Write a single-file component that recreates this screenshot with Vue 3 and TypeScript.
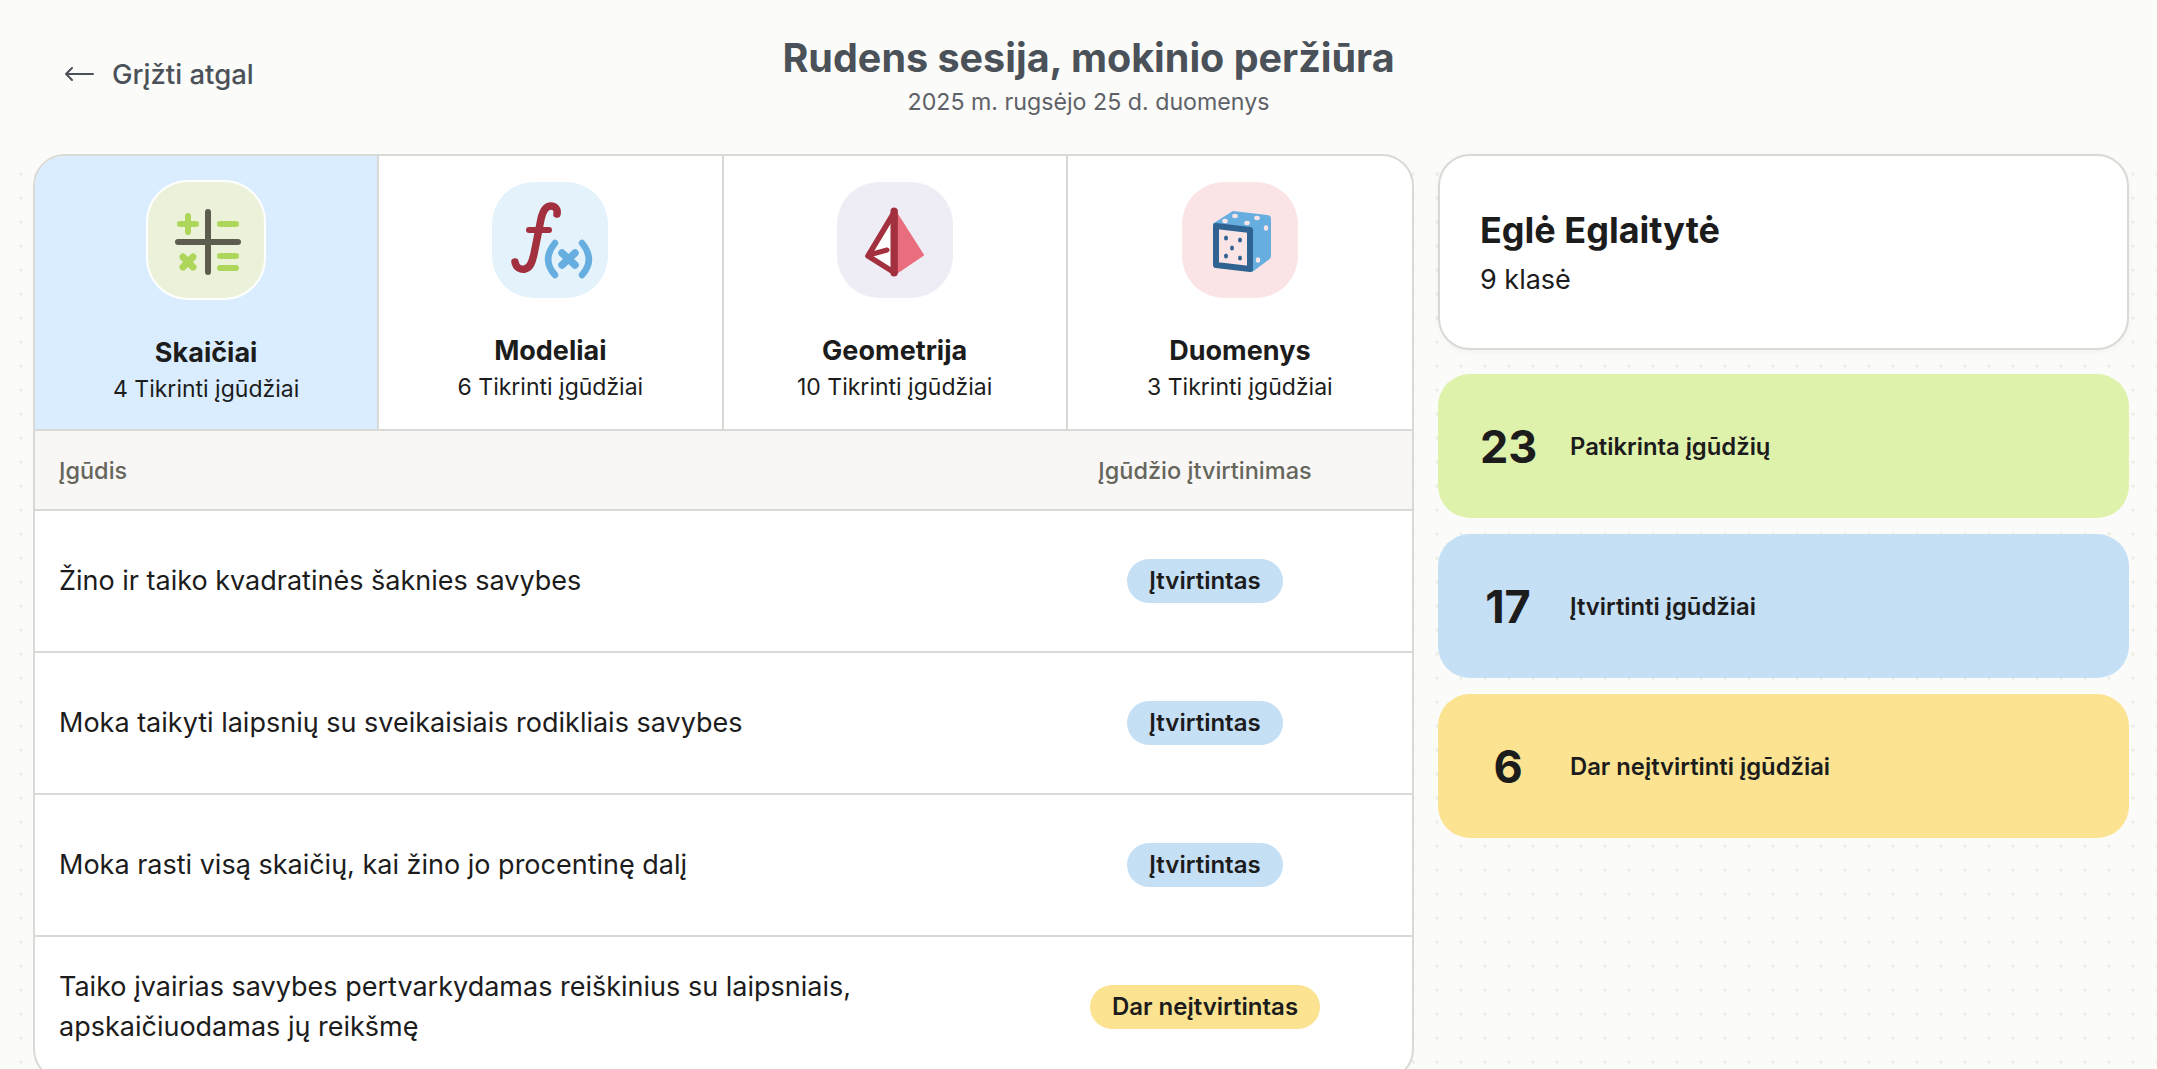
<script setup lang="ts">
interface Tab {
  name: string;
  count: number;
  tone: string;
  kind: string;
}

interface Skill {
  text: string;
  done: boolean;
}

interface Stat {
  value: number;
  label: string;
  tone: string;
}

const tabs: Tab[] = [
  { name: 'Skaičiai', count: 4, tone: 'green', kind: 'calc' },
  { name: 'Modeliai', count: 6, tone: 'blue', kind: 'fx' },
  { name: 'Geometrija', count: 10, tone: 'violet', kind: 'pyramid' },
  { name: 'Duomenys', count: 3, tone: 'pink', kind: 'dice' },
];

const skills: Skill[] = [
  { text: 'Žino ir taiko kvadratinės šaknies savybes', done: true },
  { text: 'Moka taikyti laipsnių su sveikaisiais rodikliais savybes', done: true },
  { text: 'Moka rasti visą skaičių, kai žino jo procentinę dalį', done: true },
  { text: 'Taiko įvairias savybes pertvarkydamas reiškinius su laipsniais, apskaičiuodamas jų reikšmę', done: false },
];

const stats: Stat[] = [
  { value: 23, label: 'Patikrinta įgūdžių', tone: 'lime' },
  { value: 17, label: 'Įtvirtinti įgūdžiai', tone: 'sky' },
  { value: 6, label: 'Dar neįtvirtinti įgūdžiai', tone: 'sand' },
];
</script>

<template>
  <div class="page">
    <header class="top">
      <a class="back">
        <svg class="back-arrow" width="30" height="18" viewBox="0 0 30 18" fill="none">
          <path d="M29 9H2M8 3L2 9l6 6" stroke="#4b5158" stroke-width="2" stroke-linecap="round" stroke-linejoin="round" />
        </svg>
        <span>Grįžti atgal</span>
      </a>
      <div class="heading">
        <h1>Rudens sesija, mokinio peržiūra</h1>
        <p>2025 m. rugsėjo 25 d. duomenys</p>
      </div>
    </header>

    <div class="layout">
      <section class="board">
        <div class="tabs">
          <div v-for="(tab, i) in tabs" :key="tab.name" class="tab" :class="{ active: i === 0 }">
            <div class="tile" :class="tab.tone">
              <svg v-if="tab.kind === 'calc'" width="116" height="116" viewBox="0 0 116 116" fill="none">
                <g stroke="#aed65a" stroke-width="6" stroke-linecap="round">
                  <path d="M32 42H48M40 34V50M72 42H88" />
                  <path d="M35 75L45 85M45 75L35 85" stroke-width="7" />
                  <path d="M72 74H88M72 86H88" />
                </g>
                <path d="M60 30V90M30 60H90" stroke="#5d5d4f" stroke-width="6" stroke-linecap="round" />
              </svg>
              <svg v-else-if="tab.kind === 'fx'" width="116" height="116" viewBox="0 0 116 116" fill="none">
                <path d="M23 80c1 6 6 8 10 7 5-1 7-6 9-15l7-35c2-9 6-13 10-13 4 0 7 3 6 8" stroke="#a3303f" stroke-width="7.500" stroke-linecap="round" />
                <path d="M37 48H57" stroke="#a3303f" stroke-width="6" stroke-linecap="round" />
                <path d="M63 61c-9 11-9 22 0 32M90 61c9 11 9 22 0 32" stroke="#67aee0" stroke-width="6.500" stroke-linecap="round" />
                <path d="M70 71L83 83M83 71L70 83" stroke="#67aee0" stroke-width="7.500" stroke-linecap="round" />
              </svg>
              <svg v-else-if="tab.kind === 'pyramid'" width="116" height="116" viewBox="0 0 116 116" fill="none">
                <path d="M58 29L86 73L58 92Z" fill="#e86d7d" stroke="#e86d7d" stroke-width="2" stroke-linejoin="round" />
                <path d="M58 29L31 74L58 91Z" fill="#fff" stroke="#a3303f" stroke-width="5.500" stroke-linejoin="round" />
                <path d="M57 29V91" stroke="#a3303f" stroke-width="7" stroke-linecap="round" />
                <path d="M32 73L50 68" stroke="#a3303f" stroke-width="5" stroke-linecap="round" />
              </svg>
              <svg v-else width="116" height="116" viewBox="0 0 116 116" fill="none">
                <path d="M32 42L51 30L85 34Q88 34 88 37V74Q88 76 86 77L70 89Z" fill="#67aee0" stroke="#67aee0" stroke-width="2" stroke-linejoin="round" />
                <path d="M34 44L68 48V87L34 83Z" fill="#fbe4e6" stroke="#2f6391" stroke-width="6" stroke-linejoin="round" />
                <g fill="#fbe4e6">
                  <ellipse cx="43" cy="39" rx="2.800" ry="2.200" />
                  <ellipse cx="53" cy="34" rx="2.800" ry="2.200" />
                  <ellipse cx="65" cy="41" rx="2.800" ry="2.200" />
                  <ellipse cx="75" cy="36" rx="2.800" ry="2.200" />
                  <ellipse cx="84" cy="46" rx="2.200" ry="2.800" />
                  <ellipse cx="76" cy="78" rx="2.200" ry="2.800" />
                </g>
                <g fill="#2f6391">
                  <ellipse cx="44" cy="56" rx="2" ry="2.500" />
                  <ellipse cx="58" cy="58" rx="2" ry="2.500" />
                  <ellipse cx="50" cy="66" rx="2" ry="2.500" />
                  <ellipse cx="44" cy="74" rx="2" ry="2.500" />
                  <ellipse cx="58" cy="76" rx="2" ry="2.500" />
                </g>
              </svg>
            </div>
            <h2>{{ tab.name }}</h2>
            <p>{{ tab.count }} Tikrinti įgūdžiai</p>
          </div>
        </div>

        <div class="table-head">
          <span>Įgūdis</span>
          <span class="head-right">Įgūdžio įtvirtinimas</span>
        </div>

        <div v-for="skill in skills" :key="skill.text" class="row">
          <div class="skill">{{ skill.text }}</div>
          <div class="status">
            <span class="pill" :class="skill.done ? 'sky' : 'sand'">{{ skill.done ? 'Įtvirtintas' : 'Dar neįtvirtintas' }}</span>
          </div>
        </div>
      </section>

      <aside class="side">
        <div class="student">
          <h2>Eglė Eglaitytė</h2>
          <p>9 klasė</p>
        </div>
        <div v-for="stat in stats" :key="stat.label" class="stat" :class="stat.tone">
          <span class="value">{{ stat.value }}</span>
          <span class="label">{{ stat.label }}</span>
        </div>
      </aside>
    </div>
  </div>
</template>

<style>
html,
body {
  margin: 0;
  height: 100%;
  overflow: hidden;
  background: #fbfbf9;
}
</style>

<style scoped>
.page {
  height: 1069px;
  overflow: hidden;
  font-family: Inter, 'Noto Sans', sans-serif;
  color: #1c1c1c;
  background-color: #fbfbf9;
  background-image: radial-gradient(circle, #f0f0ea 1.5px, transparent 2px);
  background-size: 24px 24px;
  background-position: 9px 18px;
  position: relative;
}

.page::before {
  content: '';
  position: absolute;
  left: 0;
  right: 0;
  top: 0;
  height: 165px;
  background: #fbfbf9;
}

.top {
  position: relative;
  height: 154px;
  display: flex;
  justify-content: center;
}

.back {
  position: absolute;
  left: 64px;
  top: 56px;
  display: flex;
  align-items: center;
  gap: 18px;
  font-size: 27.500px;
  line-height: 36px;
  font-weight: 500;
  color: #4b5158;
}

.heading {
  text-align: center;
  padding: 33px 0 0 20px;
}

.heading h1 {
  margin: 0;
  font-size: 39.500px;
  line-height: 50px;
  font-weight: 700;
  color: #4b5158;
}

.heading p {
  margin: 3px 0 0;
  font-size: 23.200px;
  line-height: 32px;
  color: #5e6268;
}

.layout {
  position: relative;
  display: flex;
  gap: 24px;
  padding: 0 28px 0 33px;
  align-items: flex-start;
}

.board {
  width: 1381px;
  flex: none;
  box-sizing: border-box;
  background: #fff;
  border: 2px solid #d9d9d5;
  border-radius: 32px;
  overflow: hidden;
}

.tabs {
  display: grid;
  grid-template-columns: repeat(4, 1fr);
  border-bottom: 2px solid #d9d9d5;
}

.tab {
  height: 273px;
  box-sizing: border-box;
  display: flex;
  flex-direction: column;
  align-items: center;
  padding-top: 26px;
  border-right: 2px solid #d9d9d5;
}

.tab:last-child {
  border-right: 0;
}

.tab.active {
  background: #d9edff;
  padding-top: 24px;
}

.tile {
  width: 116px;
  height: 116px;
  border-radius: 42px;
  flex: none;
}

.tile svg {
  display: block;
}

.tab.active .tile {
  border: 2px solid #fff;
}

.tile.green { background: #ebf2d9; }
.tile.blue { background: #e4f2fb; }
.tile.violet { background: #eeedf6; }
.tile.pink { background: #fae4e6; }

.tab h2 {
  margin: 35px 0 0;
  font-size: 27px;
  line-height: 36px;
  font-weight: 700;
}

.tab p {
  margin: 3px 0 0;
  font-size: 23px;
  line-height: 30px;
}

.table-head {
  height: 80px;
  box-sizing: border-box;
  display: flex;
  align-items: center;
  background: #f8f7f5;
  padding-left: 24px;
  font-size: 23.500px;
  font-weight: 500;
  color: #66665c;
  border-bottom: 2px solid #d9d9d5;
}

.table-head span:first-child {
  flex: 1;
}

.head-right {
  width: 344px;
  text-align: center;
  flex: none;
  padding-right: 70px;
  box-sizing: border-box;
}

.row {
  height: 142px;
  box-sizing: border-box;
  display: flex;
  align-items: center;
  padding-left: 24px;
  border-bottom: 2px solid #d9d9d5;
}

.skill {
  flex: 1;
  max-width: 880px;
  font-size: 27px;
  line-height: 40px;
}

.status {
  margin-left: auto;
  width: 344px;
  flex: none;
  padding-right: 70px;
  box-sizing: border-box;
  display: flex;
  justify-content: center;
}

.pill {
  display: inline-block;
  padding: 0 22px;
  height: 44px;
  line-height: 44px;
  border-radius: 22px;
  font-size: 24px;
  font-weight: 600;
}

.sky { background: #c5dff5; }
.sand { background: #fbe391; }
.lime { background: #dff2ac; }

.side {
  flex: 1;
  display: flex;
  flex-direction: column;
  gap: 16px;
}

.student {
  height: 196px;
  box-sizing: border-box;
  background: #fff;
  border: 2px solid #d9d9d5;
  border-radius: 32px;
  padding: 52px 40px 0;
  margin-bottom: 8px;
  box-shadow: 0 2px 6px rgba(0, 0, 0, 0.04);
}

.student h2 {
  margin: 0;
  font-size: 36px;
  line-height: 44px;
  font-weight: 700;
}

.student p {
  margin: 10px 0 0;
  font-size: 27px;
  line-height: 36px;
}

.stat {
  height: 144px;
  border-radius: 32px;
  display: flex;
  align-items: center;
  padding-left: 42px;
  gap: 34px;
}

.value {
  width: 56px;
  text-align: center;
  font-size: 45px;
  font-weight: 700;
}

.label {
  font-size: 23.800px;
  font-weight: 600;
}
</style>
